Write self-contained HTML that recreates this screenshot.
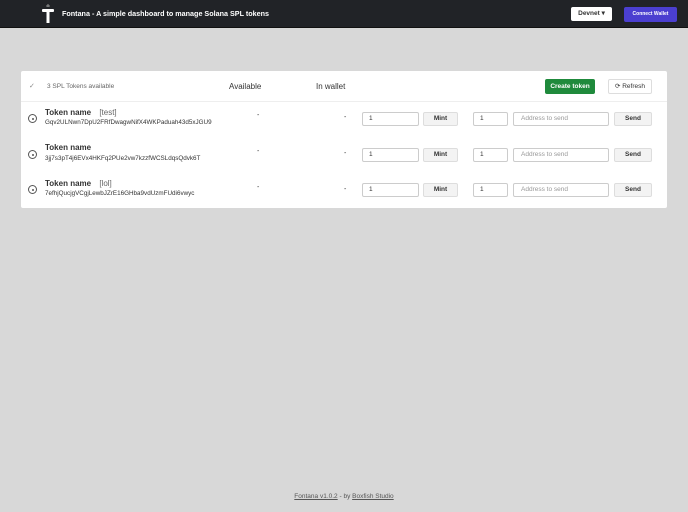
<!DOCTYPE html>
<html><head><style>
*{box-sizing:border-box;margin:0;padding:0}
body{width:688px;height:512px;background:#d8d8d8;font-family:"Liberation Sans",sans-serif;position:relative;overflow:hidden}
.top{position:absolute;left:0;top:0;width:688px;height:28px;background:#212327;border-bottom:1px solid #111}
.t{position:absolute;left:62px;top:9px;color:#fff;font-size:7.2px;font-weight:bold}
.dev{position:absolute;left:571px;top:7px;width:41px;height:14px;background:#fff;border-radius:2px;font-size:6.5px;font-weight:bold;color:#333;text-align:center;line-height:14px}
.cw{position:absolute;left:624px;top:7px;width:53px;height:15px;background:#4b3fd0;border-radius:2px;font-size:5px;font-weight:bold;color:#fff;text-align:center;line-height:15px}
.card{position:absolute;left:21px;top:71px;width:646px;height:137px;background:#fff;border-radius:2px}
.ab{position:absolute;font-size:7px;color:#333}
.hr{position:absolute;left:21px;top:101px;width:646px;height:1px;background:#eee}
.btn{position:absolute;height:14px;border:1px solid #ddd;border-radius:2px;background:#f3f3f3;font-size:6.5px;font-weight:bold;color:#333;text-align:center;line-height:12px}
.in{position:absolute;height:14px;border:1px solid #ccc;border-radius:2px;background:#fff;font-size:6.5px;color:#333;padding-left:6px;line-height:12px}
.ph{color:#999;padding-left:7px}
.circ{position:absolute;width:9px;height:9px;border:1px solid #555;border-radius:50%}
.circ:after{content:"";position:absolute;left:2.5px;top:2.5px;width:2px;height:2px;background:#555;border-radius:50%}
</style></head><body>
<div class="top">
<svg style="position:absolute;left:41px;top:4px" width="14" height="20" viewBox="0 0 14 20"><path d="M7 0v3M5 2h4" stroke="#aaa" stroke-width="0.8"/><rect x="1" y="5" width="12" height="3" rx="1" fill="#fff"/><rect x="5.5" y="7" width="3" height="12" fill="#fff"/></svg>
<div class="t">Fontana - A simple dashboard to manage Solana SPL tokens</div>
<div class="dev">Devnet ▾</div>
<div class="cw">Connect Wallet</div>
</div>
<div class="card"></div>
<div class="ab" style="left:29px;top:82px;color:#888">✓</div>
<div class="ab" style="left:47px;top:83px;font-size:6.5px;color:#666">3 SPL Tokens available</div>
<div class="ab" style="left:229px;top:82px;font-size:8px">Available</div>
<div class="ab" style="left:316px;top:82px;font-size:8px">In wallet</div>
<div style="position:absolute;left:545px;top:79px;width:50px;height:15px;background:#1f8a3c;border-radius:2px;color:#fff;font-size:6.5px;font-weight:bold;text-align:center;line-height:15px">Create token</div>
<div class="btn" style="left:608px;top:79px;width:44px;height:15px;background:#fff;line-height:13px;font-weight:normal">⟳ Refresh</div>
<div class="hr"></div>

<div class="circ" style="left:28px;top:114px"></div>
<div class="ab" style="left:45px;top:108px;font-size:8px;font-weight:bold">Token name <span style="font-weight:normal;color:#666;margin-left:6px">[test]</span></div>
<div class="ab" style="left:45px;top:119px;font-size:6.3px">Gqv2ULNwn7DpU2FRfDwagwNifX4WKPaduah43d5xJGU9</div>
<div class="ab" style="left:257px;top:112px">-</div><div class="ab" style="left:344px;top:114px">-</div>
<div class="in" style="left:362px;top:112px;width:57px">1</div>
<div class="btn" style="left:423px;top:112px;width:35px">Mint</div>
<div class="in" style="left:473px;top:112px;width:35px">1</div>
<div class="in ph" style="left:513px;top:112px;width:96px">Address to send</div>
<div class="btn" style="left:614px;top:112px;width:38px">Send</div>

<div class="circ" style="left:28px;top:150px"></div>
<div class="ab" style="left:45px;top:143px;font-size:8px;font-weight:bold">Token name</div>
<div class="ab" style="left:45px;top:155px;font-size:6.3px">3jj7s3pT4j6EVx4HKFq2PUe2vw7kzzfWCSLdqsQdvk6T</div>
<div class="ab" style="left:257px;top:148px">-</div><div class="ab" style="left:344px;top:150px">-</div>
<div class="in" style="left:362px;top:148px;width:57px">1</div>
<div class="btn" style="left:423px;top:148px;width:35px">Mint</div>
<div class="in" style="left:473px;top:148px;width:35px">1</div>
<div class="in ph" style="left:513px;top:148px;width:96px">Address to send</div>
<div class="btn" style="left:614px;top:148px;width:38px">Send</div>

<div class="circ" style="left:28px;top:185px"></div>
<div class="ab" style="left:45px;top:179px;font-size:8px;font-weight:bold">Token name <span style="font-weight:normal;color:#666;margin-left:6px">[lol]</span></div>
<div class="ab" style="left:45px;top:190px;font-size:6.3px">7efhjQucjgVCgjLewbJZrE16GHba9vdUzmFUdi6vwyc</div>
<div class="ab" style="left:257px;top:184px">-</div><div class="ab" style="left:344px;top:186px">-</div>
<div class="in" style="left:362px;top:183px;width:57px">1</div>
<div class="btn" style="left:423px;top:183px;width:35px">Mint</div>
<div class="in" style="left:473px;top:183px;width:35px">1</div>
<div class="in ph" style="left:513px;top:183px;width:96px">Address to send</div>
<div class="btn" style="left:614px;top:183px;width:38px">Send</div>

<div class="ab" style="left:0;width:688px;text-align:center;top:493px;font-size:6.5px;color:#555"><u>Fontana v1.0.2</u> - by <u>Boxfish Studio</u></div>
</body></html>
